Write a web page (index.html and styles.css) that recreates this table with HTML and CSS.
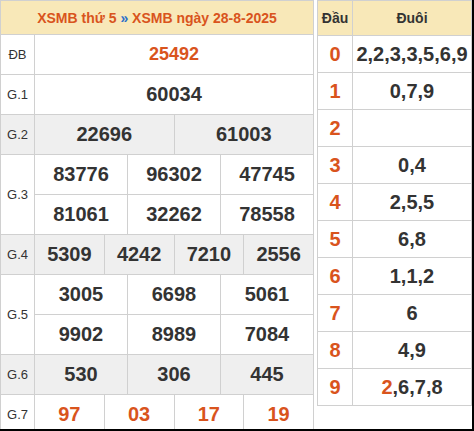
FILE: index.html
```html
<!DOCTYPE html>
<html lang="vi">
<head>
<meta charset="utf-8">
<title>XSMB</title>
<link rel="stylesheet" href="styles.css">
</head>
<body>
<div class="page">
  <table class="kq">
    <colgroup>
      <col class="c-label">
      <col span="12">
    </colgroup>
    <tr class="head"><th colspan="13">XSMB thứ 5 <span class="sep">»</span> XSMB ngày 28-8-2025</th></tr>
    <tr><td class="lbl">ĐB</td><td colspan="12" class="num db">25492</td></tr>
    <tr><td class="lbl">G.1</td><td colspan="12" class="num">60034</td></tr>
    <tr class="gray"><td class="lbl">G.2</td><td colspan="6" class="num">22696</td><td colspan="6" class="num">61003</td></tr>
    <tr><td class="lbl" rowspan="2">G.3</td><td colspan="4" class="num">83776</td><td colspan="4" class="num">96302</td><td colspan="4" class="num">47745</td></tr>
    <tr><td colspan="4" class="num">81061</td><td colspan="4" class="num">32262</td><td colspan="4" class="num">78558</td></tr>
    <tr class="gray"><td class="lbl">G.4</td><td colspan="3" class="num">5309</td><td colspan="3" class="num">4242</td><td colspan="3" class="num">7210</td><td colspan="3" class="num">2556</td></tr>
    <tr><td class="lbl" rowspan="2">G.5</td><td colspan="4" class="num">3005</td><td colspan="4" class="num">6698</td><td colspan="4" class="num">5061</td></tr>
    <tr><td colspan="4" class="num">9902</td><td colspan="4" class="num">8989</td><td colspan="4" class="num">7084</td></tr>
    <tr class="gray"><td class="lbl">G.6</td><td colspan="4" class="num">530</td><td colspan="4" class="num">306</td><td colspan="4" class="num">445</td></tr>
    <tr><td class="lbl">G.7</td><td colspan="3" class="num red">97</td><td colspan="3" class="num red">03</td><td colspan="3" class="num red">17</td><td colspan="3" class="num red">19</td></tr>
  </table>
  <table class="dd">
    <tr class="head"><th class="dau-h">Đầu</th><th>Đuôi</th></tr>
    <tr><td class="dau">0</td><td class="duoi">2,2,3,3,5,6,9</td></tr>
    <tr><td class="dau">1</td><td class="duoi">0,7,9</td></tr>
    <tr><td class="dau">2</td><td class="duoi"></td></tr>
    <tr><td class="dau">3</td><td class="duoi">0,4</td></tr>
    <tr><td class="dau">4</td><td class="duoi">2,5,5</td></tr>
    <tr><td class="dau">5</td><td class="duoi">6,8</td></tr>
    <tr><td class="dau">6</td><td class="duoi">1,1,2</td></tr>
    <tr><td class="dau">7</td><td class="duoi">6</td></tr>
    <tr><td class="dau">8</td><td class="duoi">4,9</td></tr>
    <tr><td class="dau">9</td><td class="duoi"><span class="red">2</span>,6,7,8</td></tr>
  </table>
</div>
</body>
</html>
```

FILE: styles.css
```css
html, body {
  margin: 0;
  padding: 0;
  background: #fff;
}
body {
  font-family: "Liberation Sans", Arial, sans-serif;
  color: #333;
}
.page {
  width: 474px;
  height: 431px;
  box-sizing: border-box;
  border-right: 2px solid #000;
  border-bottom: 2px solid #000;
  display: flex;
  align-items: flex-start;
  overflow: hidden;
}
table {
  border-collapse: collapse;
  table-layout: fixed;
}
td, th {
  border: 1px solid #d0d0d0;
  padding: 0;
  text-align: center;
}
.kq {
  width: 314px;
  height: 431px;
}
.c-label {
  width: 34px;
}
.head th {
  background: #f8e8b8;
  font-size: 14px;
  font-weight: bold;
}
.kq .head th {
  height: 33px;
  color: #d9541d;
}
.sep {
  color: #2b6fca;
}
.kq td {
  height: 39px;
}
.lbl {
  font-size: 13px;
  color: #333;
}
.num {
  font-size: 20px;
  font-weight: bold;
  color: #333;
}
.num.db {
  font-size: 18px;
  color: #d9541d;
}
.red {
  color: #d9541d;
}
.gray td {
  background: #efefef;
}
.dd {
  margin-left: 3px;
  width: 155px;
}
.dd .head th {
  height: 34px;
  color: #333;
}
.dau-h {
  width: 34px;
}
.dd td {
  height: 36px;
}
.dau {
  font-size: 20px;
  font-weight: bold;
  color: #d9541d;
}
.duoi {
  font-size: 20px;
  font-weight: bold;
  color: #333;
}
```
